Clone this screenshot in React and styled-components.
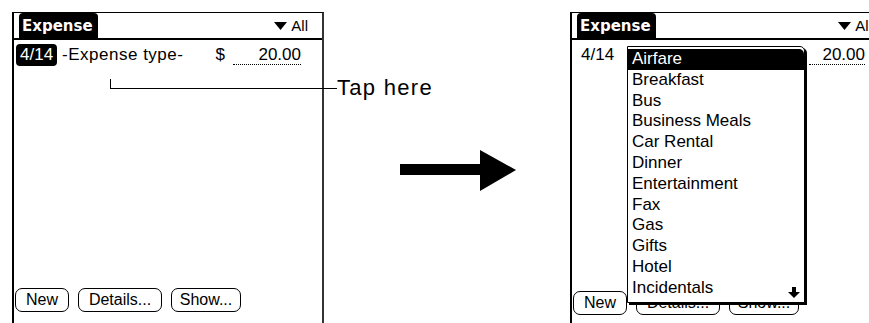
import React from "react"
import styled, { createGlobalStyle } from "styled-components"

const Global = createGlobalStyle`
  html, body {
    margin: 0;
    padding: 0;
    background: #fff;
    overflow: hidden;
  }
`

const categories = [
  "Airfare", "Breakfast", "Bus", "Business Meals", "Car Rental", "Dinner",
  "Entertainment", "Fax", "Gas", "Gifts", "Hotel", "Incidentals",
]

function TitleBar() {
  return (
    <Title>
      <Tab>Expense</Tab>
      <Trigger>
        <svg width="13" height="8" viewBox="0 0 13 8">
          <polygon points="0,0 13,0 6.5,8" fill="#000" />
        </svg>
        <span>All</span>
      </Trigger>
    </Title>
  )
}

function Buttons({bottom}) {
  return (
    <ButtonRow bottom={bottom}>
      <Btn w={54}>New</Btn>
      <Btn w={84}>Details...</Btn>
      <Btn w={70}>Show...</Btn>
    </ButtonRow>
  )
}

function App() {
  return (
    <Page>
      <Global />
      <Screen w={312}>
        <TitleBar />
        <Row>
          <DateChip dark>4/14</DateChip>
          <TypeText>-Expense type-</TypeText>
          <Dollar>$</Dollar>
          <Amount w={68}>20.00</Amount>
        </Row>
        <Buttons bottom={22} />
      </Screen>

      <Leader />

      <Middle>
        <Label>Tap here</Label>
        <ArrowBox>
          <svg width="116" height="42" viewBox="0 0 116 42">
            <rect x="0" y="14" width="82" height="11" fill="#000" />
            <polygon points="80,0 116,20 80,41" fill="#000" />
          </svg>
        </ArrowBox>
      </Middle>

      <Screen w={318}>
        <TitleBar />
        <Row>
          <DateChip>4/14</DateChip>
          <Spacer />
          <Amount w={56}>20.00</Amount>
        </Row>
        <Buttons bottom={19} />
        <Popup>
          {categories.map((c, i) => (
            <Item key={c} selected={i === 0}>{c}</Item>
          ))}
          <DownArrow>
            <svg width="12" height="11" viewBox="0 0 12 11">
              <rect x="4" y="0" width="4" height="5" fill="#000" />
              <polygon points="0,5 12,5 6,11" fill="#000" />
            </svg>
          </DownArrow>
        </Popup>
      </Screen>
    </Page>
  )
}

export default App

const Page = styled.div`
  position: relative;
  display: flex;
  align-items: flex-start;
  padding: 12px 0 0 12px;
  width: 869px;
  height: 323px;
  box-sizing: border-box;
  font-family: "Liberation Sans", Arial, sans-serif;
  color: #000;
`

const Screen = styled.div`
  position: relative;
  flex: 0 0 auto;
  width: ${({w}) => w}px;
  height: 322px;
  box-sizing: border-box;
  border-top: 1px solid #000;
  border-left: 2px solid #000;
  border-right: 2px solid #333;
  display: flex;
  flex-direction: column;
`

const Title = styled.div`
  display: flex;
  align-items: center;
  height: 25px;
  border-bottom: 2px solid #000;
  padding-left: 5px;
  padding-right: 14px;
`

const Tab = styled.div`
  height: 100%;
  display: flex;
  align-items: center;
  background: #000;
  color: #fff;
  font-family: "DejaVu Sans", sans-serif;
  font-weight: 700;
  font-size: 15px;
  padding: 0 5px 0 3px;
  border-radius: 4px 4px 0 0;
`

const Trigger = styled.div`
  margin-left: auto;
  display: flex;
  align-items: center;
  gap: 4px;
  font-size: 15px;
`

const Row = styled.div`
  display: flex;
  align-items: center;
  height: 22px;
  margin-top: 4px;
  padding-left: 2px;
  padding-right: 21px;
  font-size: 17px;
`

const DateChip = styled.div`
  background: ${({dark}) => (dark ? "#000" : "transparent")};
  color: ${({dark}) => (dark ? "#fff" : "#000")};
  border-radius: 4px;
  padding: 0 ${({dark}) => (dark ? "4px" : "7px")};
  line-height: 22px;
`

const TypeText = styled.div`
  margin-left: 5px;
  letter-spacing: 0.5px;
`

const Spacer = styled.div`
  flex: 1;
`

const Dollar = styled.div`
  margin-left: auto;
  margin-right: 8px;
`

const Amount = styled.div`
  width: ${({w}) => w}px;
  text-align: right;
  border-bottom: 1px dotted #000;
  line-height: 18px;
`

const ButtonRow = styled.div`
  margin-top: auto;
  margin-bottom: ${({bottom}) => bottom}px;
  display: flex;
  gap: 9px;
  padding-left: 1px;
`

const Btn = styled.div`
  width: ${({w}) => w}px;
  height: 24px;
  box-sizing: border-box;
  border: 1.5px solid #000;
  border-radius: 7px;
  display: flex;
  align-items: center;
  justify-content: center;
  font-size: 16px;
`

const Leader = styled.div`
  position: absolute;
  left: 110px;
  top: 79px;
  width: 226px;
  height: 9px;
  border-left: 1px solid #000;
  border-bottom: 1px solid #000;
`

const Middle = styled.div`
  flex: 0 0 246px;
  display: flex;
  flex-direction: column;
`

const Label = styled.div`
  margin-top: 64px;
  margin-left: 13px;
  font-size: 22px;
  line-height: 24px;
  letter-spacing: 1.3px;
`

const ArrowBox = styled.div`
  margin-top: 50px;
  margin-left: 76px;
  line-height: 0;
`

const Popup = styled.div`
  position: absolute;
  left: 55px;
  top: 33px;
  width: 178px;
  height: 257px;
  box-sizing: border-box;
  background: #fff;
  border: 1px solid #000;
  border-top-right-radius: 5px;
  box-shadow: 2px 2px 0 #000;
  padding-top: 2px;
`

const Item = styled.div`
  height: 20.8px;
  line-height: 20.8px;
  padding-left: 4px;
  font-size: 17px;
  background: ${({selected}) => (selected ? "#000" : "#fff")};
  color: ${({selected}) => (selected ? "#fff" : "#000")};
  border-top-right-radius: ${({selected}) => (selected ? "5px" : "0")};
`

const DownArrow = styled.div`
  position: absolute;
  right: 4px;
  bottom: 4px;
  line-height: 0;
`
